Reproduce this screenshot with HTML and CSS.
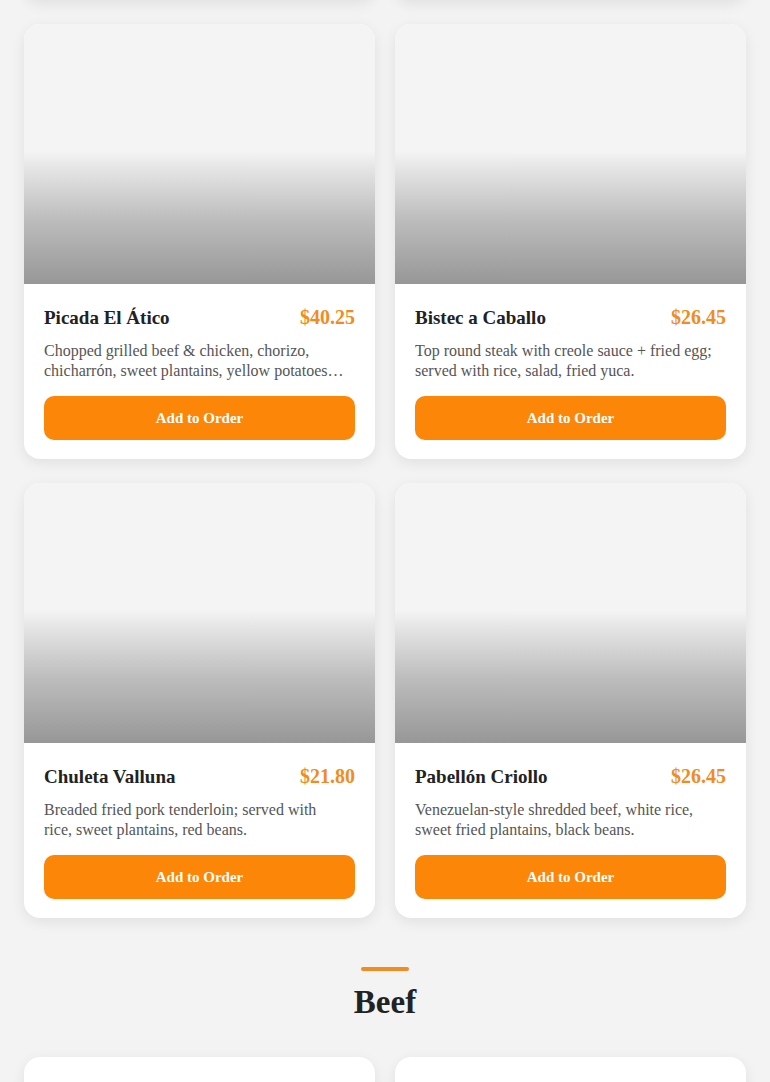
FILE: index.html
```html
<!DOCTYPE html>
<html lang="en">
<head>
<meta charset="utf-8">
<title>Menu</title>
<link rel="stylesheet" href="styles.css">
</head>
<body>
<main class="menu">
  <section class="grid grid-prev" aria-hidden="true">
    <div class="card card-ghost"></div>
    <div class="card card-ghost"></div>
  </section>

  <section class="grid">
    <article class="card">
      <div class="card-img"></div>
      <div class="card-body">
        <div class="card-head"><h3 class="card-title">Picada El Ático</h3><span class="card-price">$40.25</span></div>
        <p class="card-desc">Chopped grilled beef &amp; chicken, chorizo, chicharrón, sweet plantains, yellow potatoes, arepitas, cheese and guacamole.</p>
        <button class="btn">Add to Order</button>
      </div>
    </article>
    <article class="card">
      <div class="card-img"></div>
      <div class="card-body">
        <div class="card-head"><h3 class="card-title">Bistec a Caballo</h3><span class="card-price">$26.45</span></div>
        <p class="card-desc">Top round steak with creole sauce + fried egg; served with rice, salad, fried yuca.</p>
        <button class="btn">Add to Order</button>
      </div>
    </article>
    <article class="card">
      <div class="card-img"></div>
      <div class="card-body">
        <div class="card-head"><h3 class="card-title">Chuleta Valluna</h3><span class="card-price">$21.80</span></div>
        <p class="card-desc">Breaded fried pork tenderloin; served with rice, sweet plantains, red beans.</p>
        <button class="btn">Add to Order</button>
      </div>
    </article>
    <article class="card">
      <div class="card-img"></div>
      <div class="card-body">
        <div class="card-head"><h3 class="card-title">Pabellón Criollo</h3><span class="card-price">$26.45</span></div>
        <p class="card-desc">Venezuelan-style shredded beef, white rice, sweet fried plantains, black beans.</p>
        <button class="btn">Add to Order</button>
      </div>
    </article>
  </section>

  <header class="section-head">
    <span class="section-bar"></span>
    <h2 class="section-title">Beef</h2>
  </header>

  <section class="grid grid-next" aria-hidden="true">
    <div class="card card-ghost"></div>
    <div class="card card-ghost"></div>
  </section>
</main>
</body>
</html>
```
FILE: styles.css
```css
* { box-sizing: border-box; }
html, body { margin: 0; padding: 0; }
body {
  background: #f3f3f3;
  font-family: "Liberation Serif", "Times New Roman", serif;
  color: #222;
  overflow: hidden;
}
.menu {
  padding: 0 24px;
  margin-top: -436px;
}
.grid {
  display: grid;
  grid-template-columns: 1fr 1fr;
  gap: 24px 20px;
  margin-bottom: 24px;
}
.card {
  background: #fff;
  border-radius: 16px;
  overflow: hidden;
  box-shadow: 0 4px 14px rgba(0, 0, 0, 0.08);
  display: flex;
  flex-direction: column;
}
.card-ghost {
  height: 436px;
}
.card-img {
  height: 260px;
  background: linear-gradient(to bottom, #f4f4f4 0%, #f4f4f4 49%, #e6e6e6 55%, #bdbdbd 75%, #979797 100%);
}
.card-body {
  padding: 21px 20px 19px;
  display: flex;
  flex-direction: column;
}
.card-head {
  display: flex;
  justify-content: space-between;
  align-items: center;
  height: 25px;
}
.card-title {
  margin: 0;
  font-size: 19px;
  font-weight: 700;
  color: #222;
  line-height: 25px;
}
.card-price {
  font-size: 20px;
  font-weight: 700;
  color: #f08c22;
  line-height: 25px;
}
.card-desc {
  margin: 11px 0 15px;
  padding-right: 8px;
  font-size: 16px;
  line-height: 20px;
  color: #555;
  height: 40px;
  overflow: hidden;
  display: -webkit-box;
  -webkit-line-clamp: 2;
  -webkit-box-orient: vertical;
}
.btn {
  height: 44px;
  border: 0;
  border-radius: 10px;
  background: #fb8608;
  color: #fff;
  font-family: inherit;
  font-size: 15px;
  font-weight: 700;
  cursor: pointer;
}
.section-head {
  display: flex;
  flex-direction: column;
  align-items: center;
  padding-top: 25px;
  margin-bottom: 37px;
}
.section-bar {
  width: 48px;
  height: 4px;
  border-radius: 2px;
  background: #f08c22;
}
.section-title {
  margin: 13px 0 0;
  font-size: 33px;
  font-weight: 700;
  line-height: 36px;
  color: #222;
}
```
